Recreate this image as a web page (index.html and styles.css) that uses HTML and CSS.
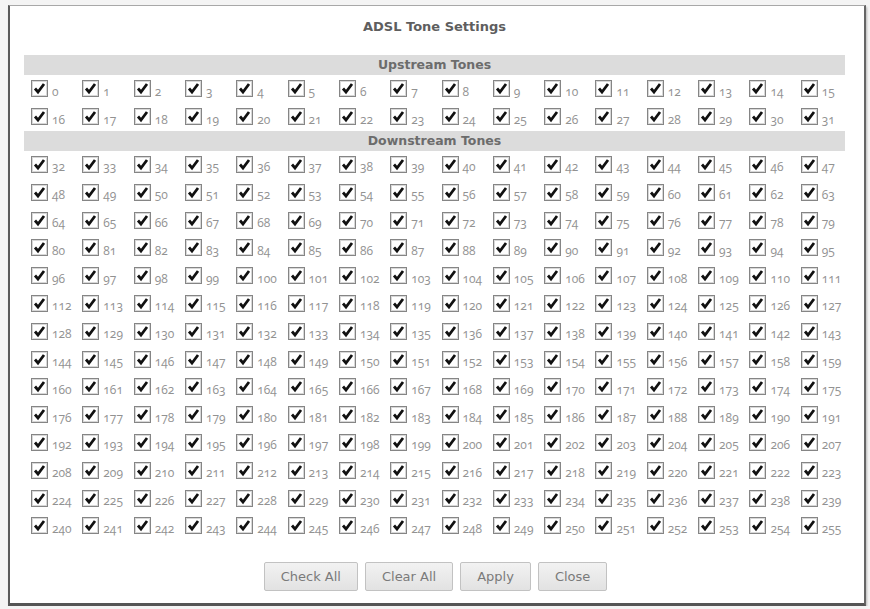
FILE: index.html
```html
<!DOCTYPE html>
<html lang="en">
<head>
    <meta charset="UTF-8">
    <title>ADSL Tone Settings</title>
    <link rel="stylesheet" href="styles.css">
</head>
<body>
    <div class="dialog">
        <h1 class="title">ADSL Tone Settings</h1>

        <div class="tones">
            <div class="section-head">Upstream Tones</div>
            <div class="tone-grid" id="upstream"></div>
            <div class="section-head">Downstream Tones</div>
            <div class="tone-grid" id="downstream"></div>
        </div>

        <div class="buttons">
            <button type="button" id="checkAll">Check All</button>
            <button type="button" id="clearAll">Clear All</button>
            <button type="button">Apply</button>
            <button type="button">Close</button>
        </div>
    </div>

    <script src="script.js"></script>
</body>
</html>
```

FILE: styles.css
```css
body {
    margin: 0;
    background-color: #f4f4f4;
    font-family: "Open Sans", Arial, sans-serif;
}
.dialog {
    box-sizing: border-box;
    width: 858px;
    height: 601px;
    margin: 5px 0 0 8px;
    padding: 0 19px 0 14px;
    background-color: white;
    border-top: 1px solid #a8a8a8;
    border-left: 2px solid #5a5a5a;
    border-right: 2px solid #666;
    border-bottom: 3px solid #555;
    box-shadow: 1px 2px 2px rgba(0, 0, 0, 0.25);
}
.title {
    margin: 0 0 20px;
    padding-top: 13px;
    font-family: "DejaVu Sans", Verdana, sans-serif;
    font-size: 13px;
    line-height: 16px;
    font-weight: bold;
    text-align: center;
    color: #5e5e5e;
}
.section-head {
    height: 20px;
    line-height: 20px;
    background-color: #dcdcdc;
    text-align: center;
    font-family: "DejaVu Sans", Verdana, sans-serif;
    font-size: 12.5px;
    font-weight: bold;
    color: #6c6c6c;
}
.tone-grid {
    display: grid;
    grid-template-columns: repeat(16, 1fr);
    grid-auto-rows: 27.8px;
}
.tone {
    display: flex;
    align-items: center;
    padding-left: 7px;
}
.box {
    box-sizing: border-box;
    width: 17px;
    height: 17px;
    padding: 1px;
    border: 1px solid #858585;
    box-shadow: inset 0 0 0 1px #d8d8d8;
    background-color: white;
}
.box svg {
    display: block;
    width: 13px;
    height: 13px;
}
.num {
    margin-left: 4px;
    padding-top: 5px;
    font-size: 12px;
    color: #929292;
    font-variant-numeric: oldstyle-nums;
}
.buttons {
    display: flex;
    justify-content: center;
    gap: 7px;
    margin-top: 22px;
    padding-left: 2px;
}
button {
    height: 29px;
    padding: 0 16px;
    font-family: "DejaVu Sans", Verdana, sans-serif;
    font-size: 13px;
    color: #7a7a7a;
    background: linear-gradient(#f2f2f2, #e2e2e2);
    border: 1px solid #c2c2c2;
    border-radius: 2px;
    cursor: pointer;
}
```

FILE: script.js
```js
// Build the tone checkboxes
const CHECK = '<svg viewBox="0 0 13 13"><path d="M2 6.5 L5 10 L11 2" fill="none" stroke="#111" stroke-width="2.8"/></svg>';

function buildTones(gridId, from, to) {
    const grid = document.getElementById(gridId);
    let html = '';
    for (let i = from; i <= to; i++) {
        html += `<label class="tone" data-tone="${i}">
            <span class="box checked">${CHECK}</span>
            <span class="num">${i}</span>
        </label>`;
    }
    grid.innerHTML = html;
}

buildTones('upstream', 0, 31);
buildTones('downstream', 32, 255);

function setAll(checked) {
    document.querySelectorAll('.box').forEach(box => {
        box.innerHTML = checked ? CHECK : '';
    });
}

document.getElementById('checkAll').addEventListener('click', () => setAll(true));
document.getElementById('clearAll').addEventListener('click', () => setAll(false));
```
